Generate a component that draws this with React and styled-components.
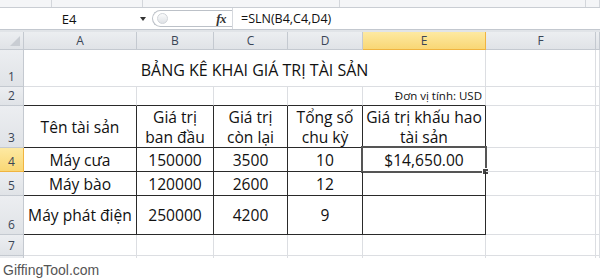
import React from 'react'
import styled, { createGlobalStyle } from 'styled-components'

const GlobalStyle = createGlobalStyle`
  html, body { margin: 0; padding: 0; background: #fff; }
  body { font-family: "Open Sans", "Liberation Sans", sans-serif; }
`

const Screen = styled.div`
  width: 600px;
  height: 279px;
  overflow: hidden;
  display: flex;
  flex-direction: column;
  background: #fff;
`

const RibbonEdge = styled.div`
  height: 7px;
  flex: none;
  background: #f4f5f7;
  border-bottom: 1px solid #c9cdd3;
  display: grid;
  grid-template-columns: 52px 91px 197px 246px 1fr;
  & > span { border-right: 1px solid #d3d6db; }
`

const FormulaBar = styled.div`
  height: 21px;
  flex: none;
  display: flex;
  align-items: center;
  background: #fff;
  border-bottom: 1px solid #c3c8cf;
`

const NameBox = styled.div`
  width: 150px;
  height: 100%;
  flex: none;
  position: relative;
  display: flex;
  align-items: center;
  justify-content: center;
  font-size: 13px;
  color: #111;
  padding-right: 12px;
  box-sizing: border-box;
`

const DropArrow = styled.span`
  position: absolute;
  right: 4px;
  top: 9px;
  width: 0;
  height: 0;
  border-left: 3px solid transparent;
  border-right: 3px solid transparent;
  border-top: 4px solid #333;
`

const Grip = styled.div`
  width: 80px;
  height: 17px;
  flex: none;
  margin-left: 2px;
  box-sizing: border-box;
  border: 1px solid #bcc1c8;
  border-radius: 9px 0 0 9px;
  border-right: none;
  display: flex;
  align-items: center;
  justify-content: space-between;
  padding: 0 6px 0 4px;
`

const GripDot = styled.span`
  width: 9px;
  height: 9px;
  border-radius: 50%;
  background: linear-gradient(#fafbfc, #dfe2e6);
  border: 1px solid #d0d4d9;
`

const FxMark = styled.span`
  font-family: "Liberation Serif", serif;
  font-style: italic;
  font-weight: bold;
  font-size: 13px;
  color: #333;
  letter-spacing: -0.5px;
`

const FormulaText = styled.div`
  flex: 1;
  height: 100%;
  display: flex;
  align-items: center;
  padding-left: 8px;
  border-left: 1px solid #d6d9de;
  font-size: 12.5px;
  color: #111;
`

const Band = styled.div`
  height: 2px;
  flex: none;
  background: #e1e4e8;
`

const Sheet = styled.div`
  flex: none;
  height: 226px;
  overflow: hidden;
  display: grid;
  grid-template-columns: 24px 113px 77px 74px 75px 123px 110px 1fr;
  grid-template-rows: 18px 37px 19px 42px 24px 24px 39px 21px 10px;
`

const Head = styled.div`
  box-sizing: border-box;
  display: flex;
  align-items: ${p => (p.$row ? 'flex-end' : 'center')};
  justify-content: center;
  padding-bottom: ${p => (p.$row ? '1px' : '0')};
  font-size: 12px;
  color: #3a4556;
  background: ${p => (p.$on ? 'linear-gradient(#fde9a2, #f9d775)' : 'linear-gradient(#eceef1, #e0e3e7)')};
  border-right: 1px solid ${p => (p.$on ? '#f0b440' : '#c4c9d0')};
  border-bottom: 1px solid ${p => (p.$on ? '#f0b440' : '#c4c9d0')};
  position: relative;
`

const CornerMark = styled.span`
  position: absolute;
  right: 3px;
  bottom: 3px;
  width: 0;
  height: 0;
  border-left: 10px solid transparent;
  border-bottom: 10px solid #c9cdd3;
`

const Cell = styled.div`
  box-sizing: border-box;
  position: relative;
  grid-column: span ${p => p.$span || 1};
  display: flex;
  align-items: ${p => p.$v || 'center'};
  justify-content: ${p => p.$h || 'center'};
  padding: ${p => p.$pad || '0'};
  text-align: center;
  white-space: pre-line;
  font-size: ${p => p.$size || '15.6px'};
  line-height: ${p => p.$lh || '20px'};
  color: #111;
  border-right: 1px solid ${p => (p.$r ? '#2a2a2a' : '#dcdee2')};
  border-bottom: 1px solid ${p => (p.$b ? '#2a2a2a' : '#dcdee2')};
`

const Selection = styled.span`
  position: absolute;
  left: -2px;
  top: -2px;
  right: -2px;
  bottom: -2px;
  border: 2px solid #555;
  pointer-events: none;
`

const Handle = styled.span`
  position: absolute;
  right: -4px;
  bottom: -4px;
  width: 5px;
  height: 5px;
  background: #444;
  border: 1px solid #fff;
`

const Watermark = styled.div`
  flex: 1;
  display: flex;
  align-items: center;
  padding: 2px 0 0 3px;
  font-family: "Liberation Sans", Arial, sans-serif;
  font-size: 14px;
  color: #555;
`

const columns = ['A', 'B', 'C', 'D', 'E', 'F', '']

const assets = [
  { row: 4, cells: ['Máy cưa', '150000', '3500', '10', '$14,650.00'] },
  { row: 5, cells: ['Máy bào', '120000', '2600', '12', ''] },
  { row: 6, cells: ['Máy phát điện', '250000', '4200', '9', ''] },
]

const headings = ['Tên tài sản', 'Giá trị\nban đầu', 'Giá trị\ncòn lại', 'Tổng số\nchu kỳ', 'Giá trị khấu hao\ntài sản']

const App = () => {
  return (
    <Screen>
      <GlobalStyle />
      <RibbonEdge>
        <span /><span /><span /><span /><span />
      </RibbonEdge>
      <FormulaBar>
        <NameBox>
          E4
          <DropArrow />
        </NameBox>
        <Grip>
          <GripDot />
          <FxMark>fx</FxMark>
        </Grip>
        <FormulaText>=SLN(B4,C4,D4)</FormulaText>
      </FormulaBar>
      <Band />
      <Sheet>
        <Head><CornerMark /></Head>
        {columns.map((c, i) => (
          <Head key={i} $on={c === 'E'}>{c}</Head>
        ))}

        <Head $row>1</Head>
        <Cell $span={5} $size="16px" $pad="4px 0 0">BẢNG KÊ KHAI GIÁ TRỊ TÀI SẢN</Cell>
        <Cell /><Cell />

        <Head $row>2</Head>
        <Cell $b /><Cell $b /><Cell $b /><Cell $b />
        <Cell $b $h="flex-end" $v="flex-end" $size="11.5px" $lh="16px" $pad="0 3px 1px 0">Đơn vị tính: USD</Cell>
        <Cell /><Cell />

        <Head $row>3</Head>
        {headings.map((h, i) => (
          <Cell key={i} $r $b>{h}</Cell>
        ))}
        <Cell /><Cell />

        {assets.map(a => (
          <React.Fragment key={a.row}>
            <Head $row $on={a.row === 4}>{a.row}</Head>
            {a.cells.map((v, i) => (
              <Cell key={i} $r $b>
                {v}
                {a.row === 4 && i === 4 && (
                  <Selection>
                    <Handle />
                  </Selection>
                )}
              </Cell>
            ))}
            <Cell /><Cell />
          </React.Fragment>
        ))}

        <Head $row>7</Head>
        <Cell /><Cell /><Cell /><Cell /><Cell /><Cell /><Cell />

        <Head $row />
        <Cell /><Cell /><Cell /><Cell /><Cell /><Cell /><Cell />
      </Sheet>
      <Watermark>GiffingTool.com</Watermark>
    </Screen>
  )
}

export default App
